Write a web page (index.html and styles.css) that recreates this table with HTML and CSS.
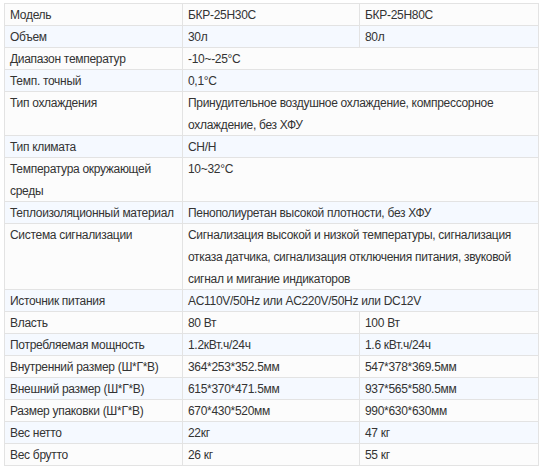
FILE: index.html
```html
<!DOCTYPE html>
<html lang="ru">
<head>
<meta charset="utf-8">
<link rel="stylesheet" href="styles.css">
</head>
<body>
<table class="spec">
  <colgroup><col class="c1"><col class="c2"><col class="c3"></colgroup>
  <tr><td><div>Модель</div></td><td><div>БКР-25Н30С</div></td><td><div>БКР-25Н80С</div></td></tr>
  <tr><td><div>Объем</div></td><td><div>30л</div></td><td><div>80л</div></td></tr>
  <tr><td><div>Диапазон температур</div></td><td colspan="2"><div>-10~-25°C</div></td></tr>
  <tr><td><div>Темп. точный</div></td><td colspan="2"><div>0,1°C</div></td></tr>
  <tr><td><div>Тип охлаждения</div></td><td colspan="2"><div class="l2">Принудительное воздушное охлаждение, компрессорное охлаждение, без ХФУ</div></td></tr>
  <tr><td><div>Тип климата</div></td><td colspan="2"><div>CH/H</div></td></tr>
  <tr><td><div class="l2">Температура окружающей среды</div></td><td colspan="2"><div>10~32°C</div></td></tr>
  <tr><td><div>Теплоизоляционный материал</div></td><td colspan="2"><div>Пенополиуретан высокой плотности, без ХФУ</div></td></tr>
  <tr><td><div>Система сигнализации</div></td><td colspan="2"><div class="l3">Сигнализация высокой и низкой температуры, сигнализация отказа датчика, сигнализация отключения питания, звуковой сигнал и мигание индикаторов</div></td></tr>
  <tr><td><div>Источник питания</div></td><td colspan="2"><div>AC110V/50Hz или AC220V/50Hz или DC12V</div></td></tr>
  <tr><td><div>Власть</div></td><td><div>80 Вт</div></td><td><div>100 Вт</div></td></tr>
  <tr><td><div>Потребляемая мощность</div></td><td><div>1.2кВт.ч/24ч</div></td><td><div>1.6 кВт.ч/24ч</div></td></tr>
  <tr><td><div>Внутренний размер (Ш*Г*В)</div></td><td><div>364*253*352.5мм</div></td><td><div>547*378*369.5мм</div></td></tr>
  <tr><td><div>Внешний размер (Ш*Г*В)</div></td><td><div>615*370*471.5мм</div></td><td><div>937*565*580.5мм</div></td></tr>
  <tr><td><div>Размер упаковки (Ш*Г*В)</div></td><td><div>670*430*520мм</div></td><td><div>990*630*630мм</div></td></tr>
  <tr><td><div>Вес нетто</div></td><td><div>22кг</div></td><td><div>47 кг</div></td></tr>
  <tr><td><div>Вес брутто</div></td><td><div>26 кг</div></td><td><div>55 кг</div></td></tr>
</table>
</body>
</html>
```
FILE: styles.css
```css
html, body {
  margin: 0;
  background: #ffffff;
}
body {
  padding: 3px 4px;
  font-family: "Liberation Sans", Arial, sans-serif;
  font-size: 12px;
  letter-spacing: -0.3px;
  color: #333333;
}
.spec {
  border-collapse: collapse;
  table-layout: fixed;
  width: 534px;
}
.c1 { width: 178px; }
.c2 { width: 177px; }
.c3 { width: 179px; }
.spec td {
  border: 1px solid #e3e3e3;
  padding: 0 5px;
  vertical-align: top;
  background: #fcfcfc;
}
.spec td > div {
  line-height: 22px;
  height: 21px;
}
.spec td > div.l2 { height: 43px; }
.spec td > div.l3 { height: 65px; }
.spec tr:nth-child(even) td {
  background: #f5f9ff;
}
```
